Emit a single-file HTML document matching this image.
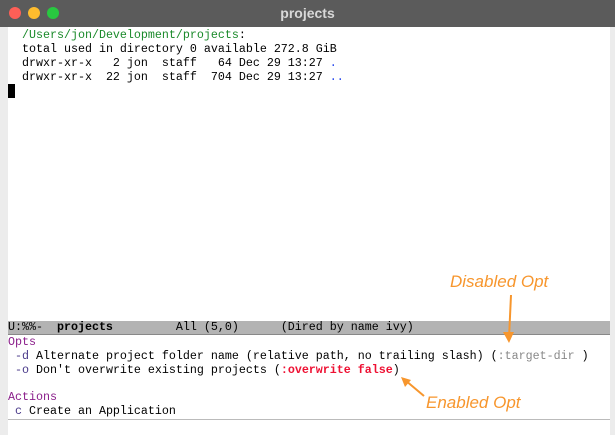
<!DOCTYPE html>
<html><head><style>
body{margin:0;width:615px;height:435px;overflow:hidden;background:#fff;position:relative;font-family:"Liberation Mono",monospace;}
.tb{position:absolute;left:0;top:0;width:615px;height:27px;background:#5b5b5b;}
.tb .t{position:absolute;left:0;width:615px;top:5px;text-align:center;color:#d8d8d8;font:bold 14px "Liberation Sans",sans-serif;}
.dot{position:absolute;top:7px;width:12px;height:12px;border-radius:50%}
.gl{position:absolute;left:0;top:27px;width:8px;height:408px;background:#ececec}
.gr{position:absolute;right:0;top:27px;width:5px;height:408px;background:#ececec}
.ln{position:absolute;left:8px;font-size:11.67px;line-height:14px;white-space:pre;color:#000}
.ml{position:absolute;left:8px;top:321px;width:602px;height:13px;background:#b3b3b3;border-bottom:1px solid #888}
.ann{position:absolute;color:#f7962d;font:italic 17px "Liberation Sans",sans-serif}
</style></head><body>
<div class="tb"><div class="dot" style="left:9px;background:#fe5f57"></div><div class="dot" style="left:28px;background:#febc2e"></div><div class="dot" style="left:47px;background:#28c840"></div><div class="t">projects</div></div>
<div class="gl"></div><div class="gr"></div>
<div class="ln" style="top:28px;left:22px"><span style="color:#1a8a2a">/Users/jon/Development/projects</span>:
total used in directory 0 available 272.8 GiB
drwxr-xr-x   2 jon  staff   64 Dec 29 13:27 <span style="color:#2244ee">.</span>
drwxr-xr-x  22 jon  staff  704 Dec 29 13:27 <span style="color:#2244ee">..</span></div>
<div style="position:absolute;left:8px;top:84px;width:7px;height:14px;background:#000"></div>
<div class="ml"></div>
<div class="ln" style="top:320px;line-height:14px">U:%%-  <b>projects</b>         All (5,0)      (Dired by name ivy)</div>
<div class="ln" style="top:336px;line-height:13.8px"><span style="color:#8b1f8b">Opts</span>
 <span style="color:#4a3a8a">-d</span> Alternate project folder name (relative path, no trailing slash) (<span style="color:#888">:target-dir</span> )
 <span style="color:#4a3a8a">-o</span> Don't overwrite existing projects (<b style="color:#ee1133">:overwrite false</b>)

<span style="color:#8b1f8b">Actions</span>
 <span style="color:#4a3a8a">c</span> Create an Application</div>
<div style="position:absolute;left:8px;top:419px;width:602px;height:1px;background:#bbb"></div>
<div class="ann" style="left:450px;top:272px">Disabled Opt</div>
<div class="ann" style="left:426px;top:393px">Enabled Opt</div>
<svg style="position:absolute;left:0;top:0" width="615" height="435">
<path d="M511 295 L509 338" stroke="#f7962d" stroke-width="2" fill="none"/>
<path d="M503 332 L509 343 L514 332 Z" fill="#f7962d"/>
<path d="M424 396 L405 380" stroke="#f7962d" stroke-width="2" fill="none"/>
<path d="M401 377 L405 387 L411 380 Z" fill="#f7962d"/>
</svg>
</body></html>
